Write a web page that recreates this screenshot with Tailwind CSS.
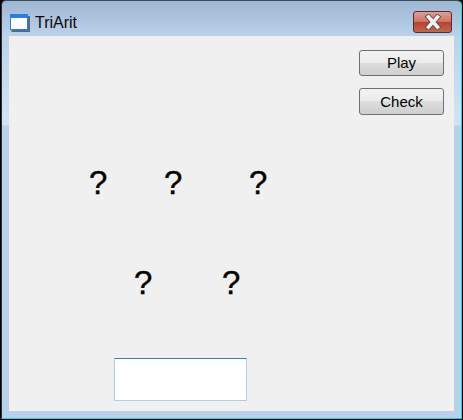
<!DOCTYPE html>
<html lang="en">
<head>
  <meta charset="UTF-8" />
  <title>TriArit</title>
  <script src="https://cdn.jsdelivr.net/npm/@tailwindcss/browser@4"></script>
</head>
<body class="w-[463px] h-[420px] overflow-hidden bg-black font-['Liberation_Sans',Arial,sans-serif]">
  <!-- window frame -->
  <div class="ml-[1px] w-[461px] h-[419px] border-l border-t border-r border-b border-l-[#26323e] border-t-[#3d4a58] border-r-[#22d3ee] border-b-[#22d3ee] rounded-t-[5px] bg-[linear-gradient(to_bottom,#9db6d2_0px,#bcd2ea_35px,#d3e3f4_124px,#b8d0ea_125px,#b8d0ea_100%)] flex flex-col">
    <!-- title bar -->
    <div class="h-[35px] shrink-0 flex items-start pl-[8px] pr-[9px]">
      <svg class="mt-[13px] w-[20px] h-[18px] shrink-0" viewBox="0 0 20 18">
        <rect x="1.5" y="2" width="18.5" height="16" fill="#50698c" />
        <rect x="0" y="0" width="18" height="16" fill="#2b7fdc" />
        <rect x="1" y="4" width="16" height="11" fill="#ffffff" />
      </svg>
      <span class="mt-[12px] ml-[5px] text-[16px] leading-[20px] text-[#0a0a0a]">TriArit</span>
      <div class="ml-auto mt-[10px] w-[39px] h-[22px] border border-[#5a2a30] rounded-[3px] bg-[linear-gradient(to_bottom,#dc9e92_0%,#cf7464_48%,#b2432e_50%,#c06a4c_100%)] flex items-center justify-center">
        <svg class="w-[20px] h-[16px]" viewBox="0 0 20 16">
          <path d="M5.5 3 L14.5 13 M14.5 3 L5.5 13" stroke="#6b4a4a" stroke-width="5.5" stroke-linecap="square" fill="none" />
          <path d="M5.5 3 L14.5 13 M14.5 3 L5.5 13" stroke="#f4f1f1" stroke-width="3.6" stroke-linecap="square" fill="none" />
        </svg>
      </div>
    </div>

    <!-- client area -->
    <div class="relative ml-[7px] w-[445px] h-[375px] bg-[#f0f0f0]">
      <div class="absolute left-[350px] top-[14px] flex flex-col gap-[12px]">
        <button class="w-[85px] h-[26px] border border-[#707070] rounded-[3px] bg-[linear-gradient(to_bottom,#f3f3f3_0%,#ebebeb_48%,#dddddd_50%,#cfcfcf_100%)] text-[15px] leading-[24px] text-black">Play</button>
        <button class="w-[85px] h-[27px] border border-[#707070] rounded-[3px] bg-[linear-gradient(to_bottom,#f3f3f3_0%,#ebebeb_48%,#dddddd_50%,#cfcfcf_100%)] text-[15px] leading-[25px] text-black">Check</button>
      </div>

      <div class="absolute left-[80px] top-[128px] text-[33px] leading-[38px] text-black [-webkit-text-stroke:0.4px_black]">?</div>
      <div class="absolute left-[155px] top-[128px] text-[33px] leading-[38px] text-black [-webkit-text-stroke:0.4px_black]">?</div>
      <div class="absolute left-[240px] top-[128px] text-[33px] leading-[38px] text-black [-webkit-text-stroke:0.4px_black]">?</div>
      <div class="absolute left-[125px] top-[228px] text-[33px] leading-[38px] text-black [-webkit-text-stroke:0.4px_black]">?</div>
      <div class="absolute left-[213px] top-[228px] text-[33px] leading-[38px] text-black [-webkit-text-stroke:0.4px_black]">?</div>

      <input class="absolute left-[105px] top-[322px] w-[133px] h-[43px] bg-white border border-[#a9d0e8] border-t-[#3c7fb1] rounded-[1px] outline-none" />
    </div>
  </div>
</body>
</html>
